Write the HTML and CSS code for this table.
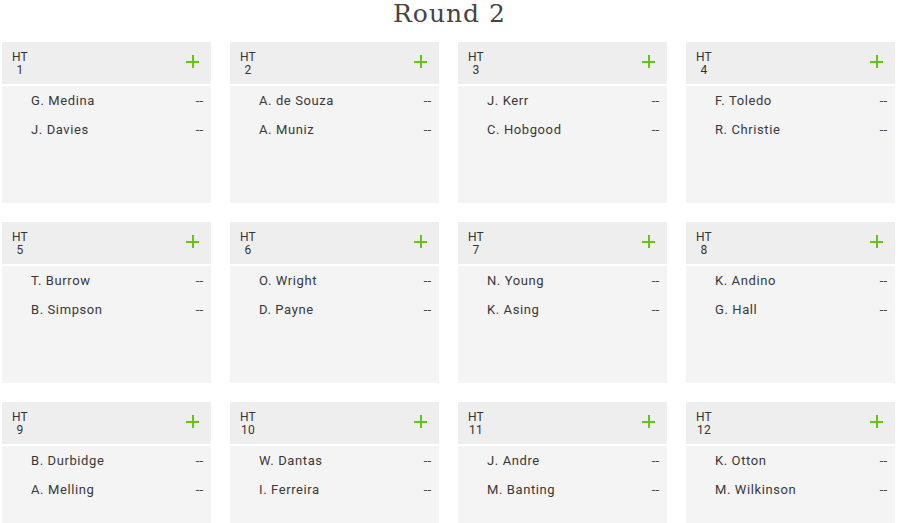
FILE: index.html
```html
<!DOCTYPE html>
<html>
<head>
<meta charset="utf-8">
<link rel="stylesheet" href="styles.css">
</head>
<body>
<div class="page">
  <h1 class="title">Round 2</h1>
  <div class="grid">
    <div class="card"><div class="head"><span class="ht">HT<br>1</span><span class="plus"></span></div><div class="rows"><div class="row"><span>G. Medina</span><span class="score">--</span></div><div class="row"><span>J. Davies</span><span class="score">--</span></div></div></div>
    <div class="card"><div class="head"><span class="ht">HT<br>2</span><span class="plus"></span></div><div class="rows"><div class="row"><span>A. de Souza</span><span class="score">--</span></div><div class="row"><span>A. Muniz</span><span class="score">--</span></div></div></div>
    <div class="card"><div class="head"><span class="ht">HT<br>3</span><span class="plus"></span></div><div class="rows"><div class="row"><span>J. Kerr</span><span class="score">--</span></div><div class="row"><span>C. Hobgood</span><span class="score">--</span></div></div></div>
    <div class="card"><div class="head"><span class="ht">HT<br>4</span><span class="plus"></span></div><div class="rows"><div class="row"><span>F. Toledo</span><span class="score">--</span></div><div class="row"><span>R. Christie</span><span class="score">--</span></div></div></div>
    <div class="card"><div class="head"><span class="ht">HT<br>5</span><span class="plus"></span></div><div class="rows"><div class="row"><span>T. Burrow</span><span class="score">--</span></div><div class="row"><span>B. Simpson</span><span class="score">--</span></div></div></div>
    <div class="card"><div class="head"><span class="ht">HT<br>6</span><span class="plus"></span></div><div class="rows"><div class="row"><span>O. Wright</span><span class="score">--</span></div><div class="row"><span>D. Payne</span><span class="score">--</span></div></div></div>
    <div class="card"><div class="head"><span class="ht">HT<br>7</span><span class="plus"></span></div><div class="rows"><div class="row"><span>N. Young</span><span class="score">--</span></div><div class="row"><span>K. Asing</span><span class="score">--</span></div></div></div>
    <div class="card"><div class="head"><span class="ht">HT<br>8</span><span class="plus"></span></div><div class="rows"><div class="row"><span>K. Andino</span><span class="score">--</span></div><div class="row"><span>G. Hall</span><span class="score">--</span></div></div></div>
    <div class="card"><div class="head"><span class="ht">HT<br>9</span><span class="plus"></span></div><div class="rows"><div class="row"><span>B. Durbidge</span><span class="score">--</span></div><div class="row"><span>A. Melling</span><span class="score">--</span></div></div></div>
    <div class="card"><div class="head"><span class="ht">HT<br>10</span><span class="plus"></span></div><div class="rows"><div class="row"><span>W. Dantas</span><span class="score">--</span></div><div class="row"><span>I. Ferreira</span><span class="score">--</span></div></div></div>
    <div class="card"><div class="head"><span class="ht">HT<br>11</span><span class="plus"></span></div><div class="rows"><div class="row"><span>J. Andre</span><span class="score">--</span></div><div class="row"><span>M. Banting</span><span class="score">--</span></div></div></div>
    <div class="card"><div class="head"><span class="ht">HT<br>12</span><span class="plus"></span></div><div class="rows"><div class="row"><span>K. Otton</span><span class="score">--</span></div><div class="row"><span>M. Wilkinson</span><span class="score">--</span></div></div></div>
  </div>
</div>
</body>
</html>
```
FILE: styles.css
```css
html, body {
  margin: 0;
  padding: 0;
  background: #ffffff;
  overflow: hidden;
}
.page {
  width: 895px;
  margin-left: 2px;
  font-family: Roboto, "Liberation Sans", sans-serif;
}
.title {
  margin: 0;
  height: 42px;
  font-family: "DejaVu Serif", "Liberation Serif", serif;
  font-weight: normal;
  font-size: 25px;
  line-height: 27px;
  letter-spacing: 1px;
  color: #444444;
  text-align: center;
}
.grid {
  display: grid;
  grid-template-columns: repeat(4, 209px);
  grid-auto-rows: 161px;
  column-gap: 19px;
  row-gap: 19px;
}
.card {
  display: flex;
  flex-direction: column;
  background: #f4f4f4;
}
.head {
  height: 44px;
  flex: none;
  box-sizing: border-box;
  padding: 9px 10px 0 10px;
  background: #eeeeee;
  border-bottom: 2px solid #ffffff;
  display: flex;
  justify-content: space-between;
  align-items: flex-start;
}
.ht {
  display: inline-block;
  text-align: center;
  font-size: 12px;
  line-height: 12.5px;
  color: #333333;
  letter-spacing: 0.2px;
}
.plus {
  position: relative;
  width: 13px;
  height: 13px;
  margin-top: 4px;
  margin-right: 2px;
}
.plus::before, .plus::after {
  content: "";
  position: absolute;
  background: #66c416;
}
.plus::before {
  left: 0;
  top: 5.5px;
  width: 13px;
  height: 2px;
}
.plus::after {
  top: 0;
  left: 5.5px;
  width: 2px;
  height: 13px;
}
.rows {
  padding: 0 8px 0 29px;
}
.row {
  height: 29px;
  display: flex;
  justify-content: space-between;
  align-items: center;
  font-size: 13px;
  color: #383838;
  letter-spacing: 0.6px;
}
.score {
  letter-spacing: 0;
  color: #404040;
}
```
